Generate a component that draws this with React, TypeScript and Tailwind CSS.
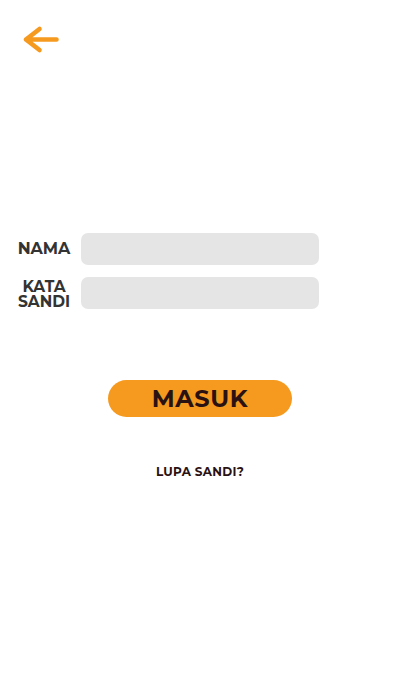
import React from "react";

export default function App() {
  return (
    <div className="w-[400px] h-[690px] bg-white flex flex-col" style={{ fontFamily: "Montserrat, 'Noto Sans', Lato, sans-serif" }}>
      <div className="pt-[25px] pl-[21px] h-[233px]">
        <svg width="40" height="30" viewBox="0 0 40 30">
          <path d="M18.5 4 L5 14.5 L18.5 25 M5 14.5 H35.5" fill="none" stroke="#f59a1e" strokeWidth="4.6" strokeLinecap="round" strokeLinejoin="round" />
        </svg>
      </div>
      <div className="flex flex-col gap-[12px]">
        <div className="flex items-center">
          <div className="w-[81px] text-center text-[16px] font-bold leading-[16px] text-[#333] pl-[7px]">NAMA</div>
          <div className="w-[238px] h-[32px] rounded-[7px] bg-[#e5e5e5]" />
        </div>
        <div className="flex items-center">
          <div className="w-[81px] text-center text-[15.5px] font-bold leading-[15px] text-[#333] pl-[7px] mt-[1px]">KATA<br />SANDI</div>
          <div className="w-[238px] h-[32px] rounded-[7px] bg-[#e5e5e5]" />
        </div>
      </div>
      <div className="flex justify-center mt-[71px]">
        <button className="w-[184px] h-[37px] rounded-full bg-[#f59a1e] text-[#2a1212] text-[24px] font-bold tracking-wide leading-none">MASUK</button>
      </div>
      <div className="mt-[46px] text-center text-[12px] font-bold text-[#2a1212] tracking-wide">LUPA SANDI?</div>
    </div>
  );
}
